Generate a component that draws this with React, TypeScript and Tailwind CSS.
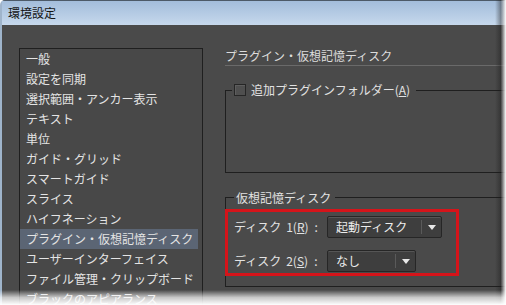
import React from "react";

const items = [
  "一般",
  "設定を同期",
  "選択範囲・アンカー表示",
  "テキスト",
  "単位",
  "ガイド・グリッド",
  "スマートガイド",
  "スライス",
  "ハイフネーション",
  "プラグイン・仮想記憶ディスク",
  "ユーザーインターフェイス",
  "ファイル管理・クリップボード",
  "ブラックのアピアランス",
];

const selected = 9;

function Arrow() {
  return (
    <svg width="8" height="5" viewBox="0 0 8 5">
      <path d="M0 0 L8 0 L4 5 Z" fill="#e8e8e8" />
    </svg>
  );
}

function Dropdown({ value, width }: { value: string; width: string }) {
  return (
    <div
      className={`flex items-center h-[22px] ${width} border border-[#262626] bg-[#3e3e3e] rounded-[2px] shadow-[inset_0_1px_0_#555]`}
    >
      <span className="flex-1 pl-[8px] text-[#ececec]">{value}</span>
      <div className="w-px h-[14px] bg-[#2a2a2a] border-r border-[#5a5a5a]" />
      <div className="w-[19px] flex justify-center">
        <Arrow />
      </div>
    </div>
  );
}

function DiskRow({ n, k, value, width }: { n: string; k: string; value: string; width: string }) {
  return (
    <div className="flex items-center">
      <span className="w-[93px] flex text-[#e2e2e2]">
        <span>ディスク</span>
        <span className="ml-[5px]">
          {n}(<u>{k}</u>)
        </span>
        <span className="ml-[6px]">:</span>
      </span>
      <Dropdown value={value} width={width} />
    </div>
  );
}

export default function App() {
  return (
    <div className="relative w-[506px] h-[305px] bg-white overflow-hidden font-['Meiryo','Noto_Sans_CJK_JP',sans-serif] text-[12px]">
      <div className="flex flex-col w-[506px] h-[305px] rounded-tl-[5px] border-t border-[#4d5a68] border-l-[2px] border-l-[#9fb4cb] bg-[#4a4a4a]">
        {/* Title bar */}
        <div className="shrink-0 h-[24px] flex items-center pl-[6px] bg-gradient-to-b from-[#a3bddb] to-[#c6d8ec] text-[#151515]">
          環境設定
        </div>

        <div className="flex flex-1 min-h-0 pl-[17px] pt-[23px]">
          {/* Category list */}
          <div className="shrink-0 w-[184px] h-[300px] border border-[#1f1f1f] bg-[#484848] text-[#e4e4e4] pr-[4px]">
            {items.map((item, i) => (
              <div
                key={item}
                className={`h-[20px] leading-[20px] pl-[6px] whitespace-nowrap ${
                  i === selected ? "bg-[#5b6574]" : ""
                }`}
              >
                {item}
              </div>
            ))}
          </div>

          {/* Settings panel */}
          <div className="flex-1 ml-[22px] -mt-[23px] pt-[21px] text-[#e2e2e2]">
            <div className="h-[20px] leading-[20px] border-b border-[#6a6a6a] text-[#dcdcdc]">
              プラグイン・仮想記憶ディスク
            </div>

            <fieldset className="mt-[16px] h-[91px] border border-r-0 border-[#1f1f1f]">
              <legend className="ml-[6px] px-[2px] pr-[6px] flex items-center h-[16px]">
                <span className="w-[12px] h-[12px] border border-[#262626] bg-[#4f4f4f] shadow-[inset_1px_1px_0_#5e5e5e] mr-[5px]" />
                追加プラグインフォルダー(<u>A</u>)
              </legend>
            </fieldset>

            <fieldset className="mt-[16px] h-[98px] border border-r-0 border-[#1f1f1f]">
              <legend className="ml-[8px] px-[2px] pr-[4px] h-[17px] leading-[17px]">仮想記憶ディスク</legend>
              <div className="-ml-px mt-[3px] w-[234px] h-[67px] border-[3px] border-[#d5141a] pl-[6px] pt-[4px] flex flex-col gap-[12px]">
                <DiskRow n="1" k="R" value="起動ディスク" width="w-[115px]" />
                <DiskRow n="2" k="S" value="なし" width="w-[89px]" />
              </div>
            </fieldset>
          </div>
        </div>
      </div>

      {/* edge fade of the cropped screenshot */}
      <div className="absolute top-0 right-0 bottom-0 w-[11px] bg-gradient-to-r from-transparent via-[#1a1a1a]/40 to-white" />
      <div className="absolute left-0 right-0 bottom-0 h-[15px] bg-gradient-to-b from-transparent via-white/70 to-white" />
    </div>
  );
}
